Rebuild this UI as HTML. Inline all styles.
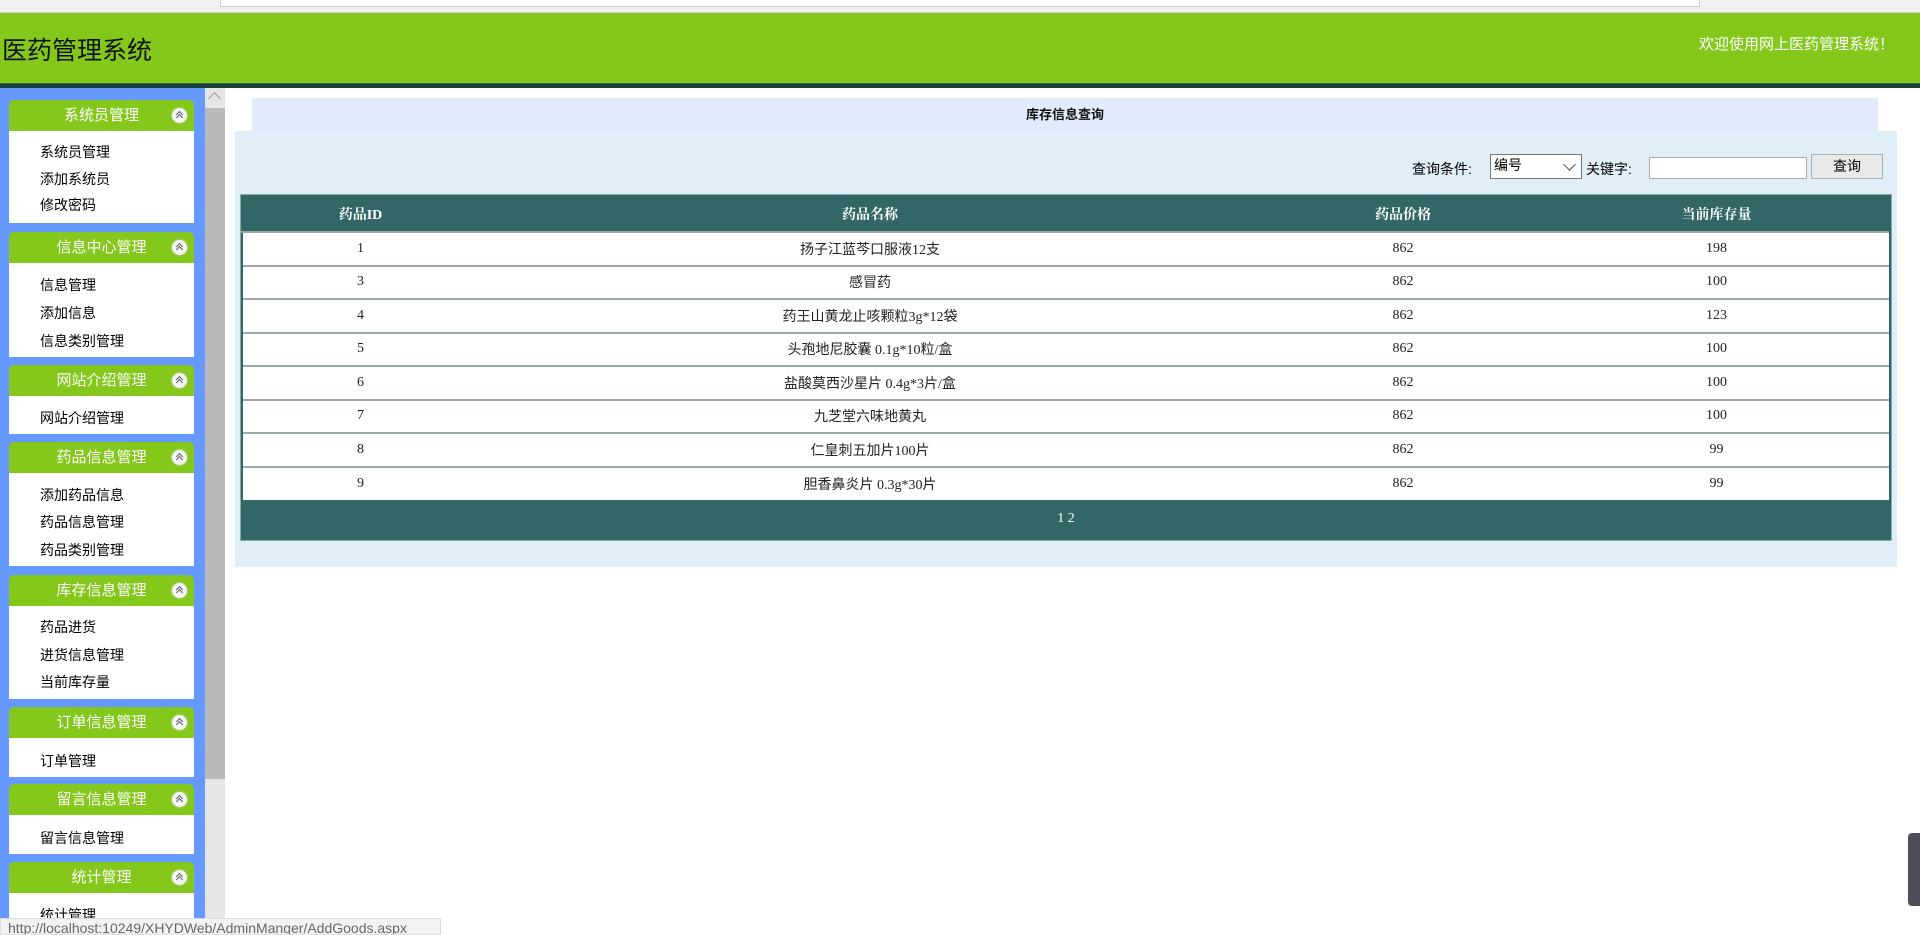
<!DOCTYPE html>
<html><head><meta charset="utf-8"><style>
*{margin:0;padding:0;box-sizing:border-box}
body{width:1920px;height:935px;overflow:hidden;background:#fff;font-family:"Liberation Sans","Noto Sans CJK SC",sans-serif;position:relative}
.topbar{position:absolute;left:0;top:0;width:1920px;height:13px;background:#f0f0f0;border-bottom:1px solid #d0d0d0}
.addr{position:absolute;left:220px;top:0;width:1480px;height:7px;background:#fff;border:1px solid #ccc;border-top:none}
.header{position:absolute;left:0;top:13px;width:1920px;height:70px;background:#84c81c}
.band{position:absolute;left:0;top:83px;width:1920px;height:5px;background:#173d3f;border-top:1px solid #3b6b2a}
.title{position:absolute;left:2px;top:23px;font-size:25px;color:#111;line-height:30px}
.welcome{position:absolute;left:1699px;top:20px;font-size:15px;color:#fff}
.side{position:absolute;left:0;top:88px;width:205px;height:847px;background:#6699ff}
.sb{position:absolute;left:205px;top:88px;width:20px;height:847px;background:#e6e6e6}
.thumb{position:absolute;left:205px;top:108px;width:20px;height:671px;background:#b9b9b9}
.arr{position:absolute;left:210px;top:94px;width:9px;height:9px;border-left:1.5px solid #999;border-top:1.5px solid #999;transform:rotate(45deg)}
.ph{position:absolute;left:9px;width:185px;height:31px;background:#84c81c;border-radius:5px 5px 0 0;color:#fff;font-size:15px;text-align:center;line-height:31px}
.ph i{position:absolute;left:163px;top:8px;width:15px;height:15px;border-radius:50%;background:#f4f4f4;box-shadow:0 0 2px #ddd}
.ph i:before,.ph i:after{content:"";position:absolute;left:5px;width:4px;height:4px;border-left:1.5px solid #555;border-top:1.5px solid #555;transform:rotate(45deg)}
.ph i:before{top:4px}.ph i:after{top:7px}
.pb{position:absolute;left:9px;width:185px;background:#fff}
.it{position:absolute;left:40px;font-size:14px;color:#000;line-height:16px}
.ttl{position:absolute;left:252px;top:98px;width:1626px;height:33px;background:#e1ebfb;text-align:center;font-size:13px;font-weight:bold;line-height:33px;color:#111}
.box{position:absolute;left:235px;top:131px;width:1662px;height:436px;background:#e0eef8}
.lbl{position:absolute;font-size:14px;color:#000;top:159px}
.sel{position:absolute;left:1490px;top:154px;width:92px;height:25px;border:1px solid #767676;background:#fff;font-size:14px;padding-left:3px;line-height:20px}
.sel:after{content:"";position:absolute;right:7px;top:5px;width:8px;height:8px;border-right:1px solid #555;border-bottom:1px solid #555;transform:rotate(45deg)}
.inp{position:absolute;left:1649px;top:157px;width:158px;height:22px;border:1px solid #aaa;background:#fff}
.btn{position:absolute;left:1811px;top:154px;width:72px;height:25px;border:1px solid #adadad;background:#e9e9e9;font-size:14px;text-align:center;line-height:23px}
table{position:absolute;left:241px;top:195px;width:1650px;border-collapse:collapse;border:2px solid #336666;outline:1px solid #8aa;font-family:"Liberation Serif","Noto Sans CJK SC",serif}
th{background:#336666;color:#fff;font-size:14px;height:36px;font-weight:bold;font-family:"Liberation Serif","Noto Serif CJK SC",serif}
td{height:33.5px;text-align:center;font-size:14px;color:#222;border-top:2px solid #9aa7a7;background:#fff}
td:first-child{border-left:2px solid #336666}
td:last-child{border-right:2px solid #336666}
tr.f td{background:#336666;color:#fff;height:39px;border:none}
.status{position:absolute;left:0;top:918px;width:441px;height:17px;background:#f3f3f3;border:1px solid #ddd;font-size:14px;color:#666;padding-left:7px;line-height:18px;overflow:hidden}
.wid{position:absolute;left:1908px;top:833px;width:14px;height:73px;background:#4a4f5a;border-radius:4px 0 0 4px}
</style></head><body>
<div class="topbar"><div class="addr"></div></div>
<div class="header"><div class="title">医药管理系统</div><div class="welcome">欢迎使用网上医药管理系统！</div></div>
<div class="band"></div>
<div class="side"></div>
<div class="sb"></div><div class="thumb"></div><div class="arr"></div>

<div class="ph" style="top:100px">系统员管理<i></i></div>
<div class="pb" style="top:131px;height:92px"></div>
<div class="it" style="top:144px">系统员管理</div>
<div class="it" style="top:171px">添加系统员</div>
<div class="it" style="top:197px">修改密码</div>

<div class="ph" style="top:232px">信息中心管理<i></i></div>
<div class="pb" style="top:263px;height:94px"></div>
<div class="it" style="top:277px">信息管理</div>
<div class="it" style="top:305px">添加信息</div>
<div class="it" style="top:333px">信息类别管理</div>

<div class="ph" style="top:365px">网站介绍管理<i></i></div>
<div class="pb" style="top:396px;height:38px"></div>
<div class="it" style="top:410px">网站介绍管理</div>

<div class="ph" style="top:442px">药品信息管理<i></i></div>
<div class="pb" style="top:473px;height:93px"></div>
<div class="it" style="top:487px">添加药品信息</div>
<div class="it" style="top:514px">药品信息管理</div>
<div class="it" style="top:542px">药品类别管理</div>

<div class="ph" style="top:575px">库存信息管理<i></i></div>
<div class="pb" style="top:606px;height:93px"></div>
<div class="it" style="top:619px">药品进货</div>
<div class="it" style="top:647px">进货信息管理</div>
<div class="it" style="top:674px">当前库存量</div>

<div class="ph" style="top:707px">订单信息管理<i></i></div>
<div class="pb" style="top:738px;height:39px"></div>
<div class="it" style="top:753px">订单管理</div>

<div class="ph" style="top:784px">留言信息管理<i></i></div>
<div class="pb" style="top:815px;height:39px"></div>
<div class="it" style="top:830px">留言信息管理</div>

<div class="ph" style="top:862px">统计管理<i></i></div>
<div class="pb" style="top:893px;height:42px"></div>
<div class="it" style="top:907px">统计管理</div>

<div class="ttl">库存信息查询</div>
<div class="box"></div>
<div class="lbl" style="left:1412px">查询条件:</div>
<div class="sel">编号</div>
<div class="lbl" style="left:1586px">关键字:</div>
<div class="inp"></div>
<div class="btn">查询</div>

<table>
<tr><th style="width:236px">药品ID</th><th style="width:784px">药品名称</th><th style="width:282px">药品价格</th><th>当前库存量</th></tr>
<tr><td>1</td><td>扬子江蓝芩口服液12支</td><td>862</td><td>198</td></tr>
<tr><td>3</td><td>感冒药</td><td>862</td><td>100</td></tr>
<tr><td>4</td><td>药王山黄龙止咳颗粒3g*12袋</td><td>862</td><td>123</td></tr>
<tr><td>5</td><td>头孢地尼胶囊 0.1g*10粒/盒</td><td>862</td><td>100</td></tr>
<tr><td>6</td><td>盐酸莫西沙星片 0.4g*3片/盒</td><td>862</td><td>100</td></tr>
<tr><td>7</td><td>九芝堂六味地黄丸</td><td>862</td><td>100</td></tr>
<tr><td>8</td><td>仁皇刺五加片100片</td><td>862</td><td>99</td></tr>
<tr><td>9</td><td>胆香鼻炎片 0.3g*30片</td><td>862</td><td>99</td></tr>
<tr class="f"><td colspan="4">1 2</td></tr>
</table>

<div class="status">http://localhost:10249/XHYDWeb/AdminManger/AddGoods.aspx</div>
<div class="wid"></div>
</body></html>
